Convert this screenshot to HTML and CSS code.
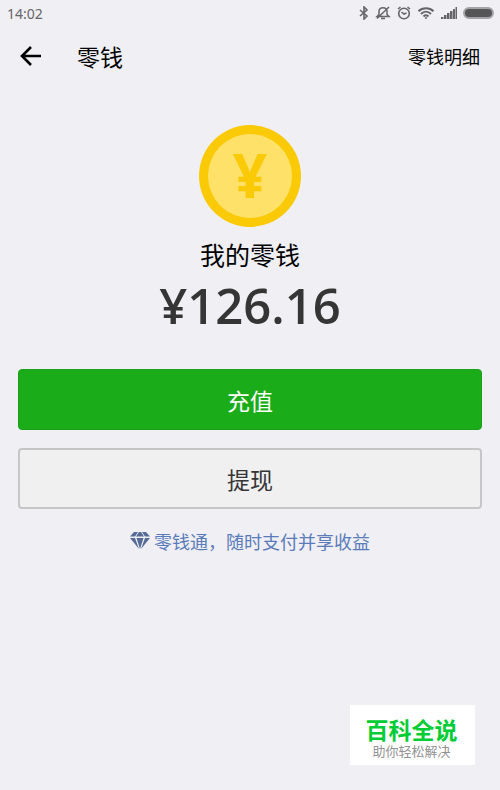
FILE: index.html
```
<!DOCTYPE html>
<html lang="zh-CN">
<head>
<meta charset="UTF-8">
<meta name="viewport" content="width=device-width, initial-scale=1.0">
<title>零钱</title>
<link rel="stylesheet" href="styles.css">
</head>
<body>
    <div class="status-bar">
        <span class="clock">14:02</span>
        <div class="status-icons">
            <!-- Bluetooth -->
            <svg width="10" height="14" viewBox="0 0 10 14" fill="none" stroke="#666669" stroke-width="1.6">
                <path d="M1 4l7 6-3 3V1l3 3-7 6"/>
            </svg>
            <!-- Muted bell -->
            <svg width="16" height="14" viewBox="0 0 16 14" fill="none" stroke="#666669" stroke-width="1.5">
                <path d="M2 10.500h12l-2-2V5.500c0-5-8-5-8 0v3zM6 12.500h4M2 12.500L14 1"/>
            </svg>
            <!-- Alarm -->
            <svg width="14" height="14" viewBox="0 0 14 14" fill="none" stroke="#666669" stroke-width="1.6">
                <circle cx="7" cy="7.5" r="5.3"/>
                <path d="M4.500 6L7 8l2.500-1M1 3l2.500-2M13 3l-2.500-2"/>
            </svg>
            <!-- Wifi -->
            <svg width="18" height="14" viewBox="0 0 18 14" fill="none" stroke="#666669" stroke-width="2">
                <path d="M1.500 5.200c4-4 11-4 15 0M4 8c3-3 7-3 10 0M6.500 10.400c1.500-1.400 3.500-1.400 5 0"/>
                <circle cx="9" cy="12" r="1" fill="#666669" stroke="none"/>
            </svg>
            <!-- Signal -->
            <svg width="16" height="12" viewBox="0 0 16 12" fill="#666669">
                <path d="M0 10h2.500v2H0zM3 8h2.500v4H3zM6 6h2.500v6H6zM9 4h2.500v8H9zM12 2h2v10h-2zM14.500 0H16v12h-1.500z"/>
            </svg>
            <span class="battery"></span>
        </div>
    </div>

    <header class="nav">
        <button class="back" type="button" aria-label="返回">
            <svg width="22" height="20" viewBox="0 0 22 20" fill="none" stroke="#000" stroke-width="2.6">
                <path d="M21 10H2M11 1L2 10l9 9"/>
            </svg>
        </button>
        <h1>零钱</h1>
        <a class="detail" href="#">零钱明细</a>
    </header>

    <main class="wallet">
        <svg class="coin" width="102" height="102" viewBox="0 0 102 102">
            <circle cx="51" cy="51" r="51" fill="#f9ca05"/>
            <circle cx="51" cy="51" r="42" fill="#fde169"/>
            <text class="coin-sign" x="51" y="73" text-anchor="middle">¥</text>
        </svg>
        <p class="label">我的零钱</p>
        <p class="amount">¥126.16</p>

        <div class="actions">
            <button class="btn btn-primary" type="button">充值</button>
            <button class="btn" type="button">提现</button>
        </div>

        <a class="promo" href="#">
            <!-- Diamond, cut into facets -->
            <svg width="20" height="18" viewBox="0 0 20 18" fill="#576b95">
                <path d="M4 0h4L5 4.500H0zM9 0h2l3 4.500H6zM12 0h4l4 4.500h-5z"/>
                <path d="M0 6h5l4 11zM6.500 6h7L10 17zM15 6h5l-9 11z"/>
            </svg>
            <span>零钱通，随时支付并享收益</span>
        </a>
    </main>

    <aside class="watermark">
        <strong>百科全说</strong>
        <span>助你轻松解决</span>
    </aside>
</body>
</html>
```
FILE: styles.css
```
* {
    box-sizing: border-box;
}

body {
    margin: 0;
    min-height: 100vh;
    background-color: #efeff4;
    color: #000;
    font-family: "Noto Sans CJK SC", sans-serif;
}

h1, p {
    margin: 0;
}

a {
    text-decoration: none;
}

svg {
    display: block;
}

/* Status bar */
.status-bar {
    display: flex;
    justify-content: space-between;
    align-items: center;
    height: 26px;
    padding: 0 6px 0 7px;
}

.clock {
    font-family: "Noto Sans", sans-serif;
    font-size: 14px;
    color: #666669;
}

.status-icons {
    display: flex;
    align-items: center;
    gap: 6px;
}

.battery {
    width: 31px;
    height: 12px;
    border: 2px solid #a4a4a7;
    border-radius: 6px;
    background-color: #555557;
}

/* Title row */
.nav {
    display: flex;
    align-items: center;
    height: 60px;
    padding: 0 20px;
}

.back {
    padding: 0;
    border: none;
    background: none;
}

.nav h1 {
    flex: 1;
    padding-left: 35px;
    font-size: 23px;
    font-weight: 400;
}

.detail {
    color: #000;
    font-size: 18px;
}

/* Balance */
.wallet {
    display: flex;
    flex-direction: column;
    align-items: center;
    padding: 39px 18px 0;
}

.coin-sign {
    fill: #f9ca05;
    font-family: "Open Sans", sans-serif;
    font-size: 60px;
    font-weight: 700;
}

.label {
    margin-top: 9px;
    font-size: 25px;
    line-height: 36px;
}

.amount {
    color: #353535;
    font-family: "Open Sans", sans-serif;
    font-size: 49px;
    font-weight: 600;
    line-height: 66px;
}

.actions {
    display: flex;
    flex-direction: column;
    gap: 18px;
    width: 100%;
    margin-top: 31px;
}

.btn {
    height: 61px;
    padding: 0;
    border: 2px solid #c6c6c8;
    border-radius: 4px;
    background-color: #f0f0f0;
    color: #353535;
    font-family: inherit;
    font-size: 23px;
}

.btn-primary {
    border: 1px solid #1a9f1a;
    background-color: #1aad19;
    color: #fff;
}

.promo {
    display: flex;
    align-items: center;
    gap: 4px;
    margin-top: 19px;
    color: #5a7cba;
    font-size: 18px;
}

/* Badge over the bottom corner */
.watermark {
    position: fixed;
    right: 25px;
    bottom: 25px;
    width: 125px;
    height: 60px;
    padding: 10px 2px 0 0;
    background-color: #fff;
    text-align: center;
}

.watermark strong,
.watermark span {
    display: block;
}

.watermark strong {
    color: #00cc33;
    font-size: 23px;
    font-weight: 700;
    line-height: 28px;
}

.watermark span {
    color: #929292;
    font-size: 13px;
    line-height: 16px;
}
```
